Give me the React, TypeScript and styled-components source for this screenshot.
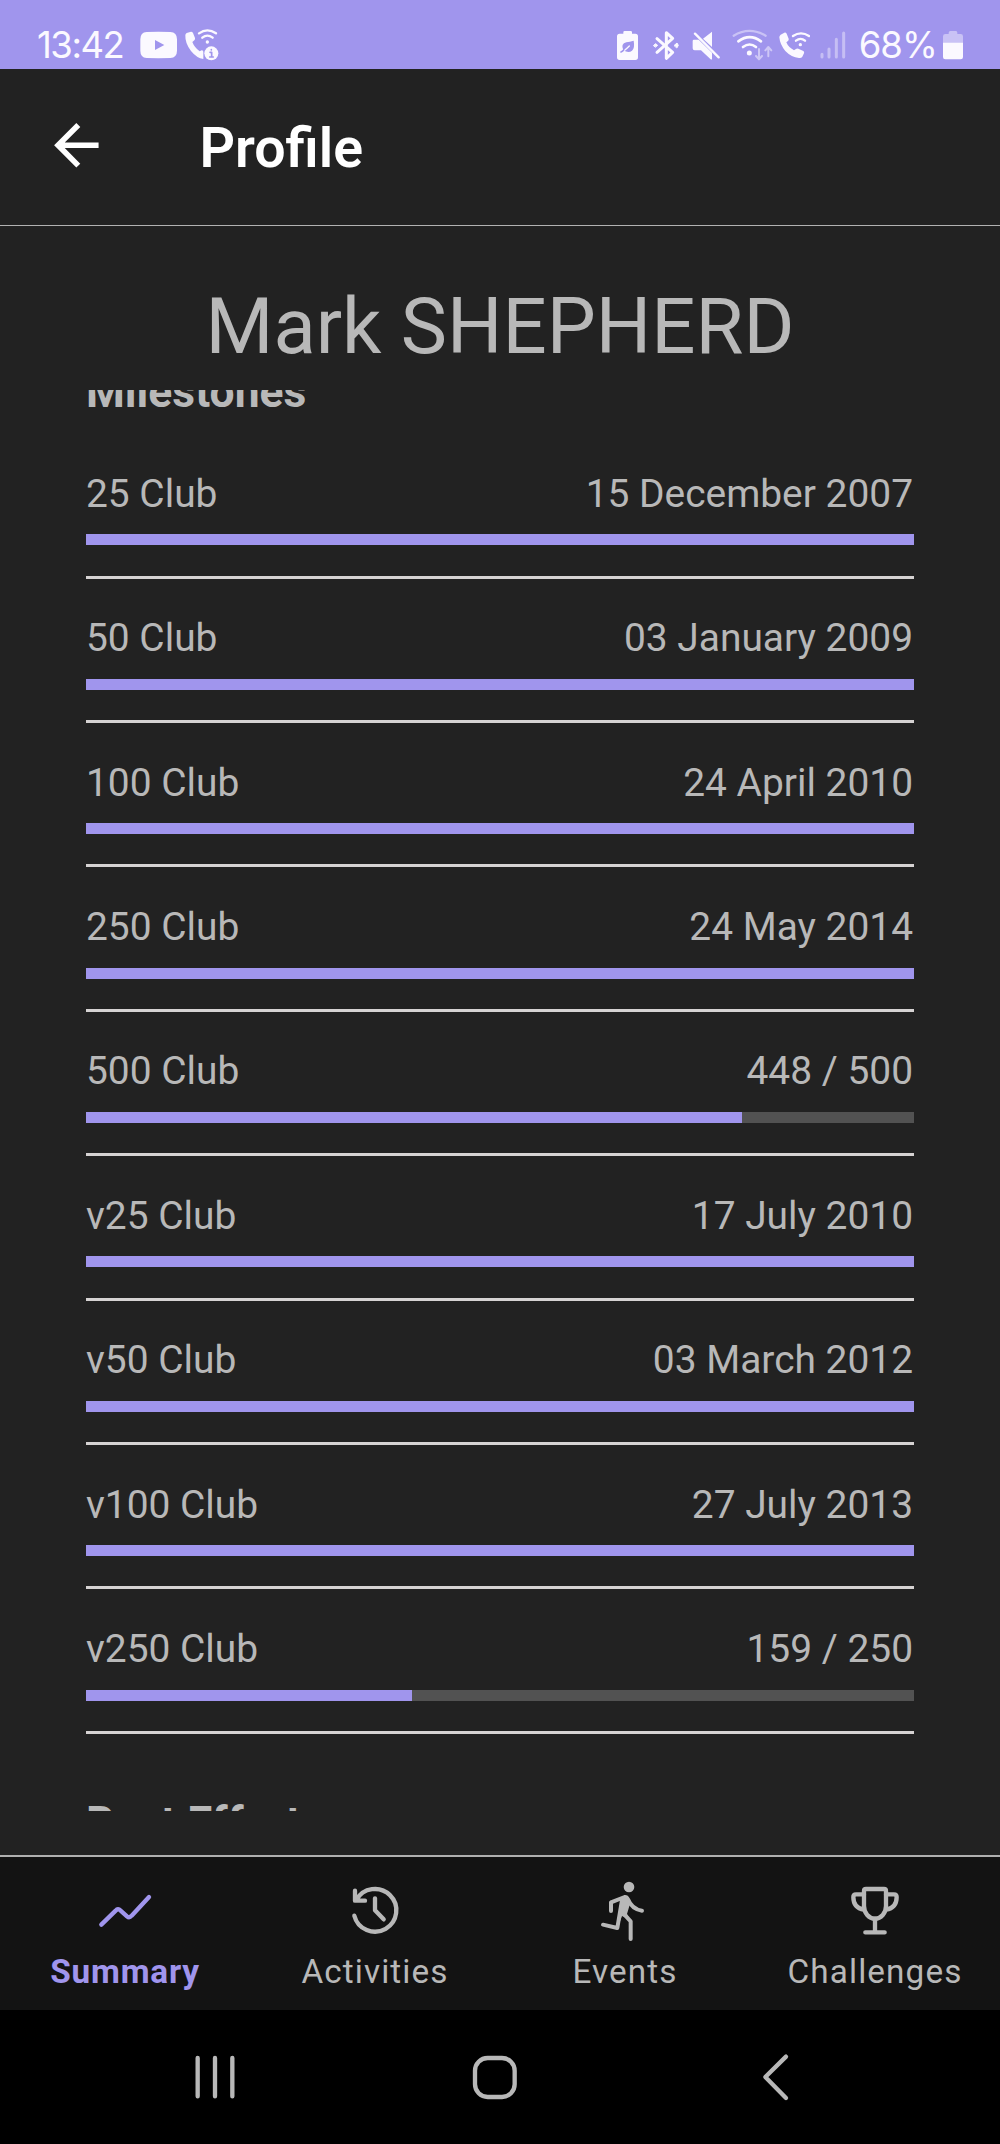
import React from "react";
import styled, { createGlobalStyle } from "styled-components";

const color = {
  accent: "#a095ed",
  page: "#222222",
  tabs: "#131313",
  text: "#b8b8b8",
  track: "#525252",
  rule: "#d6d3d3",
};

const GlobalStyle = createGlobalStyle`
  body { margin: 0; background: #000; }
  * { box-sizing: border-box; }
  svg { display: block; flex: none; }
`;

const Screen = styled.div`
  width: 1000px;
  height: 2144px;
  display: flex;
  flex-direction: column;
  overflow: hidden;
  background: ${color.page};
  color: ${color.text};
  font-family: Roboto, "Noto Sans", sans-serif;
`;

const StatusBar = styled.div`
  flex: none;
  height: 69.4px;
  padding: 20px 37px 0 37px;
  display: flex;
  align-items: center;
  justify-content: space-between;
  background: ${color.accent};
  color: #fbf9ff;
`;

const StatusGroup = styled.div`
  display: flex;
  align-items: center;
  height: 50px;
`;

const StatusText = styled.span<{ $gap?: number; $track?: number; $width: number }>`
  width: ${(p) => p.$width}px;
  margin-left: ${(p) => p.$gap ?? 0}px;
  white-space: nowrap;
  font: 400 36.5px/50px Inter, Roboto, sans-serif;
  letter-spacing: ${(p) => p.$track ?? 0}px;
`;

const StatusSvg = styled.svg<{ $gap: number }>`
  margin-left: ${(p) => p.$gap}px;
  height: 34px;
  fill: currentColor;
`;

const Header = styled.header`
  flex: none;
  height: 156.6px;
  padding: 0 0 3px 42.7px;
  display: flex;
  align-items: center;
  gap: 90px;
  border-bottom: 1px solid #b2b2b2;
  color: #fff;
`;

const Title = styled.h1`
  margin: 0;
  padding-top: 7px;
  font-size: 55.5px;
  line-height: 66px;
  font-weight: 600;
`;

const Name = styled.h2`
  flex: none;
  margin: 0;
  height: 164.3px;
  padding-top: 50.6px;
  text-align: center;
  font-size: 77.8px;
  line-height: 100px;
  font-weight: 400;
`;

const Scroller = styled.main`
  flex: 1;
  min-height: 0;
  margin-bottom: 44px;
  padding: 0 86px;
  overflow: hidden;
`;

const SectionTitle = styled.h3<{ $top: number }>`
  margin: ${(p) => p.$top}px 0 0;
  font-size: 44.4px;
  line-height: 50px;
  font-weight: 700;
`;

const List = styled.div`
  padding-top: 16.9px;
`;

const Row = styled.div`
  height: 144.4px;
  padding-top: 36.6px;
  border-bottom: 3px solid ${color.rule};
`;

const RowText = styled.div`
  display: flex;
  justify-content: space-between;
  padding-right: 1px;
  font-size: 38.9px;
  line-height: 46px;
`;

const Track = styled.div`
  margin-top: 17.7px;
  height: 11px;
  background: ${color.track};
`;

const Fill = styled.div`
  height: 100%;
  background: ${color.accent};
`;

const Tabs = styled.nav`
  flex: none;
  height: 155px;
  border-top: 2px solid #b0b0b0;
  background: ${color.tabs};
  display: grid;
  grid-template-columns: repeat(4, 1fr);
`;

const Tab = styled.div<{ $active?: boolean }>`
  padding-top: 21px;
  display: flex;
  flex-direction: column;
  align-items: center;
  gap: 10px;
  color: ${(p) => (p.$active ? color.accent : color.text)};
  font-size: 33.3px;
  line-height: 40px;
  font-weight: ${(p) => (p.$active ? 700 : 400)};
  letter-spacing: ${(p) => (p.$active ? 0.8 : 1.1)}px;
`;

const LineSvg = styled.svg`
  width: 64px;
  height: 64px;
  fill: none;
  stroke: currentColor;
  stroke-width: 13;
  stroke-linecap: round;
  stroke-linejoin: round;
`;

const SystemNav = styled.div`
  flex: none;
  height: 134px;
  padding-left: 74.7px;
  display: grid;
  grid-template-columns: repeat(3, 280px);
  align-items: center;
  justify-items: center;
  background: #000;
`;

const milestones = [
  { club: "25 Club", value: "15 December 2007", done: 1 },
  { club: "50 Club", value: "03 January 2009", done: 1 },
  { club: "100 Club", value: "24 April 2010", done: 1 },
  { club: "250 Club", value: "24 May 2014", done: 1 },
  { club: "500 Club", value: "448 / 500", done: (448 - 250) / 250 },
  { club: "v25 Club", value: "17 July 2010", done: 1 },
  { club: "v50 Club", value: "03 March 2012", done: 1 },
  { club: "v100 Club", value: "27 July 2013", done: 1 },
  { club: "v250 Club", value: "159 / 250", done: (159 - 100) / 150 },
];

type IconProps = { x: number; w: number; gap: number; children: React.ReactNode };

// Status icons share one drawing grid: three units per pixel, y from 84 to 186.
const StatusIcon = ({ x, w, gap, children }: IconProps) => (
  <StatusSvg $gap={gap} width={w / 3} viewBox={`${x} 84 ${w} 102`}>
    {children}
  </StatusSvg>
);

const line = {
  fill: "none",
  stroke: "currentColor",
  strokeLinecap: "round" as const,
  strokeLinejoin: "round" as const,
};

const tabs = [
  {
    label: "Summary",
    active: true,
    icon: (
      <LineSvg viewBox="279 294 192 192">
        <path d="M304 434L347 392Q354 384 361 391L381 409Q388 415 395 407L447 351" />
      </LineSvg>
    ),
  },
  {
    label: "Activities",
    icon: (
      <LineSvg viewBox="1029 294 192 192">
        <path d="M1063 407A64 64 0 1 0 1069 360M1065 332V362H1095M1125 355V391L1151 418" />
      </LineSvg>
    ),
  },
  {
    label: "Events",
    icon: (
      <LineSvg viewBox="279 294 192 192">
        <circle cx="387" cy="321" r="16" fill="currentColor" stroke="none" />
        <path d="M333 393V367L374 351Q380 350 384 358C391 376 402 389 426 392" strokeWidth="12" />
        <path d="M368 398L392 424V477M366 360L352 444L309 434" strokeWidth="12" />
        <path d="M362 352H386L389 375L381 402L391 420L366 408L354 440Z" fill="currentColor" stroke="none" />
      </LineSvg>
    ),
  },
  {
    label: "Challenges",
    icon: (
      <LineSvg viewBox="1029 294 192 192">
        <path d="M1098 327H1152Q1158 327 1158 333V378A33 38 0 0 1 1092 378V333Q1092 327 1098 327Z" />
        <path d="M1092 343H1068Q1060 343 1060 351C1060 374 1072 386 1092 389M1158 343H1182Q1190 343 1190 351C1190 374 1178 386 1158 389M1125 416V457M1096 457H1154" />
      </LineSvg>
    ),
  },
];

export default function App() {
  return (
    <Screen>
      <GlobalStyle />
      <StatusBar>
        <StatusGroup>
          <StatusText $width={90} $track={-1.5}>13:42</StatusText>
          <StatusIcon x={420} w={111} gap={13}>
            <path
              fillRule="evenodd"
              d="M440 96Q475 94 511 96Q531 97 531 118V152Q531 172 511 174Q475 175 440 174Q421 172 421 152V118Q421 97 440 96ZM465 120V150L493 135Z"
            />
          </StatusIcon>
          <StatusIcon x={556} w={102} gap={8}>
            <path d="M561 99L574 95Q578 95 580 99L586 114Q587 118 584 121L578 126Q584 142 600 154L606 151Q610 151 611 155V177Q591 174 574 153Q556 130 557 106Q557 101 561 99Z" />
            <path d="M598 100Q623 82 649 100M608 113Q623 101 639 113" {...line} strokeWidth="7" />
            <circle cx="623" cy="126" r="5" />
            <circle cx="635" cy="160" r="21" />
            <path d="M631 157H636V170M630 171H641M635 149V150" {...line} stroke={color.accent} strokeWidth="5" />
          </StatusIcon>
        </StatusGroup>
        <StatusGroup>
          <StatusIcon x={51} w={63} gap={0}>
            <path d="M70 101V97Q70 93 74 93H92Q96 93 96 97V101H106Q114 101 114 109V172Q114 180 106 180H59Q51 180 51 172V109Q51 101 59 101Z" />
            <path d="M101 122Q105 144 96 152Q86 160 70 151Q61 131 79 127Q89 126 101 122Z" fill={color.accent} />
            <path d="M61 159Q72 154 88 138" {...line} stroke="#fbf9ff" strokeWidth="4" />
            <path d="M63 156Q68 154 71 150" {...line} stroke={color.accent} strokeWidth="5" />
          </StatusIcon>
          <StatusIcon x={159} w={78} gap={15}>
            <path d="M171 116L218 157L199 175V98L218 115L171 157" {...line} strokeWidth="9" />
            <path d="M161 136L167 131L173 136L167 141ZM223 136L231 129L235 136L231 143Z" {...line} fill="currentColor" strokeWidth="3" />
          </StatusIcon>
          <StatusIcon x={276} w={84} gap={13}>
            <path d="M336 95V141L309 116ZM278 123Q278 119 282 119H296L336 158V176Q336 181 331 177L303 151H284Q278 151 278 145Z" />
            <path d="M285 101L356 172" {...line} strokeWidth="7" />
          </StatusIcon>
          <StatusIcon x={398} w={124} gap={12.7}>
            <path d="M403 107Q450 78 499 107" {...line} strokeWidth="7" opacity=".45" />
            <path d="M417 124Q451 99 485 124M431 141Q451 126 470 141" {...line} strokeWidth="8" />
            <circle cx="450" cy="159" r="7.5" />
            <path d="M479 147V177M470 168L479 178L488 168M507 169V143M498 151L507 141L516 151" {...line} strokeWidth="6" opacity=".5" />
          </StatusIcon>
          <StatusIcon x={537} w={95} gap={5}>
            <path d="M542 104L553 98Q558 97 560 101L566 116Q567 120 564 123L559 127Q565 142 582 151L588 147Q591 144 595 146L610 153Q614 155 612 160L607 170Q604 175 597 174Q574 172 556 153Q540 134 538 112Q538 107 542 104Z" />
            <path d="M579 108Q603 92 627 108M588 122Q602 111 615 122" {...line} strokeWidth="7" />
            <circle cx="601" cy="134" r="5" />
          </StatusIcon>
          <StatusIcon x={660} w={78} gap={9.3}>
            <path d="M666 163V171M687 147V171M709 118V171M731 99V171" {...line} strokeWidth="9" opacity=".42" />
          </StatusIcon>
          <StatusText $width={77} $gap={13} $track={-1}>68%</StatusText>
          <StatusIcon x={1030} w={60} gap={7.3}>
            <path d="M1030 129V109Q1030 102 1037 102H1047V98Q1047 93 1052 93H1069Q1073 93 1073 98V102H1083Q1090 102 1090 109V129Z" opacity=".45" />
            <path d="M1030 128H1090V171Q1090 178 1083 178H1037Q1030 178 1030 171Z" />
          </StatusIcon>
        </StatusGroup>
      </StatusBar>

      <Header>
        <svg width="66.7" height="66.7" viewBox="0 0 24 24" fill="currentColor">
          <path d="M20 11H7.83l5.59-5.59L12 4l-8 8 8 8 1.41-1.41L7.83 13H20v-2z" />
        </svg>
        <Title>Profile</Title>
      </Header>

      <Name>Mark SHEPHERD</Name>

      <Scroller>
        <SectionTitle $top={-23}>Milestones</SectionTitle>
        <List>
          {milestones.map((m) => (
            <Row key={m.club}>
              <RowText>
                <span>{m.club}</span>
                <span>{m.value}</span>
              </RowText>
              <Track>
                <Fill style={{ width: `${m.done * 100}%` }} />
              </Track>
            </Row>
          ))}
        </List>
        <SectionTitle $top={64.5}>Best Efforts</SectionTitle>
      </Scroller>

      <Tabs>
        {tabs.map((t) => (
          <Tab key={t.label} $active={t.active}>
            {t.icon}
            <span>{t.label}</span>
          </Tab>
        ))}
      </Tabs>

      <SystemNav>
        <LineSvg viewBox="548 795 192 192">
          <path d="M592 834V949M644 834V949M696 834V949" />
        </LineSvg>
        <LineSvg viewBox="1388 795 192 192">
          <rect x="1424" y="834" width="119" height="117" rx="38" />
        </LineSvg>
        <LineSvg viewBox="728 795 192 192">
          <path d="M857 830L795 891L857 954" />
        </LineSvg>
      </SystemNav>
    </Screen>
  );
}
